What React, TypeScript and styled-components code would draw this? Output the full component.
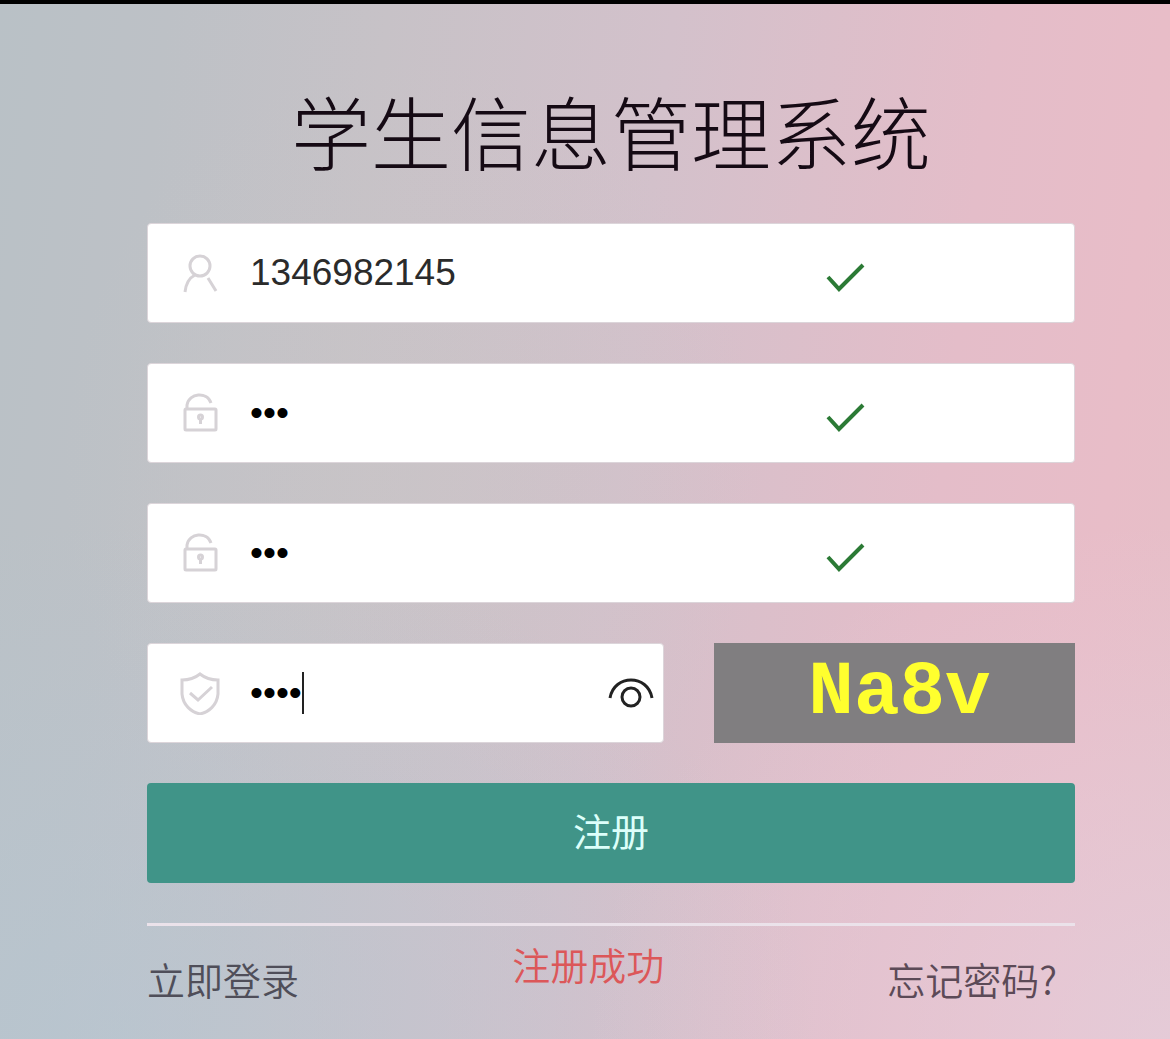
import React, { useState } from "react";
import styled, { createGlobalStyle } from "styled-components";

const sans = `"Liberation Sans", "Noto Sans CJK SC", sans-serif`;
const cjk = `"Noto Sans CJK SC", "Liberation Sans", sans-serif`;

const GlobalStyle = createGlobalStyle`
  *, *::before, *::after { box-sizing: border-box; }
  body { margin: 0; background: #d0c2cb; }
`;

const Page = styled.main`
  min-height: 100vh;
  padding: 75px 95px 36px 147px;
  border-top: 4px solid #000;
  font-family: ${cjk};
  background:
    radial-gradient(ellipse 50% 50% at 100% 100%, rgba(228, 208, 222, 0.7), transparent),
    radial-gradient(ellipse 60% 50% at 10% 100%, rgba(180, 200, 214, 0.55), transparent),
    radial-gradient(ellipse 30% 40% at 35% 45%, rgba(200, 200, 198, 0.35), transparent),
    linear-gradient(97deg, #b9c1c6 0%, #bdc1c6 13%, #c7c2c7 30%, #d3c1cb 52%, #e4bdc9 77%, #e8bdc8 90%, #e6bfc8 100%);
`;

const Title = styled.h1`
  margin: 0 0 44px;
  font-size: 80px;
  line-height: 100px;
  font-weight: 300;
  text-align: center;
  color: #150a14;
`;

const Form = styled.form`
  display: grid;
  gap: 40px;
`;

const Field = styled.label`
  display: flex;
  align-items: center;
  min-width: 0;
  height: 100px;
  padding: 0 9px 0 32px;
  border: 1px solid #dcd5da;
  border-radius: 4px;
  background: #fff;
`;

const FieldIcon = styled.svg`
  flex: none;
  width: 40px;
  height: 44px;
  margin-right: 30px;
  fill: none;
  stroke: #d6d2d6;
  stroke-width: 3;
`;

const Input = styled.input<{ $fit?: boolean }>`
  flex: ${(p) => (p.$fit ? "none" : "1")};
  field-sizing: ${(p) => (p.$fit ? "content" : "fixed")};
  min-width: 0;
  height: 60px;
  padding: 0;
  border: 0;
  outline: 0;
  background: transparent;
  font: 37px ${sans};
  color: ${(p) => (p.type === "password" ? "#000" : "#2b2b2b")};
`;

const Caret = styled.span`
  width: 2px;
  height: 42px;
  background: #222;
`;

const Tick = styled.svg`
  flex: none;
  width: 40px;
  height: 40px;
  margin-right: 200px;
  fill: none;
  stroke: #2b7a35;
  stroke-width: 4;
`;

const CodeRow = styled.div`
  display: grid;
  grid-template-columns: 517fr 361fr;
  gap: 50px;
`;

const EyeButton = styled.button`
  display: flex;
  margin-left: auto;
  padding: 0;
  border: 0;
  background: none;
`;

const EyeIcon = styled.svg`
  width: 46px;
  height: 32px;
  fill: none;
  stroke: #222;
  stroke-width: 3;
`;

const Captcha = styled.button`
  padding: 0 0 0 10px;
  border: 0;
  background: #807e80;
  color: #ffff2e;
  font: bold 76px/90px "Liberation Mono", monospace;
`;

const Submit = styled.button`
  height: 100px;
  padding: 0 0 8px;
  border: 0;
  border-radius: 4px;
  background: #409488;
  color: #dcfffa;
  font: 400 38px ${cjk};
`;

const Divider = styled.hr`
  width: 100%;
  height: 3px;
  margin: 0;
  border: 0;
  background: #ebe2ea;
`;

const Footer = styled.footer`
  display: flex;
  justify-content: space-between;
  padding: 10px 18px 0 0;
  font-size: 38px;
  line-height: 56px;
  font-weight: 350;
`;

const FooterLink = styled.a`
  padding-top: 15px;
  color: #4f4e59;
  text-decoration: none;

  &:last-child {
    color: #5c4a57;
  }
`;

const Message = styled.output`
  padding-right: 10px;
  color: #dc5759;
`;

const UserIcon = () => (
  <FieldIcon viewBox="0 0 40 44" aria-hidden="true">
    <circle cx="20" cy="15" r="10" />
    <path d="M5 41C6 32 9 27 15 24M28 27L36 40" />
  </FieldIcon>
);

const LockIcon = () => (
  <FieldIcon viewBox="0 0 40 44" aria-hidden="true">
    <path d="M7 18V14C9 2 27 0 31 12" />
    <rect x="5" y="18" width="31" height="21" rx="1" />
    <circle cx="20.500" cy="26" r="2" />
    <path d="M20.500 27V33" />
  </FieldIcon>
);

const ShieldIcon = () => (
  <FieldIcon viewBox="0 0 40 44" aria-hidden="true">
    <path d="M20 3C15 7 9 9 2 9V23C3 34 11 41 20 43C29 41 37 34 38 23V9C31 9 25 7 20 3Z" />
    <path d="M10 22L18 29L32 16" />
  </FieldIcon>
);

const Valid = () => (
  <Tick viewBox="0 0 40 40" role="img" aria-label="✓">
    <path d="M3 24L14 36L38 12" />
  </Tick>
);

export default function App() {
  const [account, setAccount] = useState("1346982145");
  const [password, setPassword] = useState("123");
  const [confirm, setConfirm] = useState("123");
  const [code, setCode] = useState("Na8v");
  const [visible, setVisible] = useState(false);

  return (
    <>
      <GlobalStyle />
      <Page>
        <Title>学生信息管理系统</Title>
        <Form onSubmit={(e) => e.preventDefault()}>
          <Field>
            <UserIcon />
            <Input type="text" aria-label="账号" value={account} onChange={(e) => setAccount(e.target.value)} />
            <Valid />
          </Field>
          <Field>
            <LockIcon />
            <Input type="password" aria-label="密码" value={password} onChange={(e) => setPassword(e.target.value)} />
            <Valid />
          </Field>
          <Field>
            <LockIcon />
            <Input type="password" aria-label="确认密码" value={confirm} onChange={(e) => setConfirm(e.target.value)} />
            <Valid />
          </Field>
          <CodeRow>
            <Field>
              <ShieldIcon />
              <Input
                $fit
                type={visible ? "text" : "password"}
                aria-label="验证码"
                value={code}
                onChange={(e) => setCode(e.target.value)}
              />
              <Caret />
              <EyeButton type="button" aria-label="显示" onClick={() => setVisible(!visible)}>
                <EyeIcon viewBox="0 0 46 32" aria-hidden="true">
                  <path d="M2 21C6 -3 40 -3 44 21" />
                  <circle cx="23" cy="20" r="9" />
                </EyeIcon>
              </EyeButton>
            </Field>
            <Captcha type="button">Na8v</Captcha>
          </CodeRow>
          <Submit type="submit">注册</Submit>
          <Divider />
        </Form>
        <Footer>
          <FooterLink href="#login">立即登录</FooterLink>
          <Message>注册成功</Message>
          <FooterLink href="#forgot">忘记密码?</FooterLink>
        </Footer>
      </Page>
    </>
  );
}
